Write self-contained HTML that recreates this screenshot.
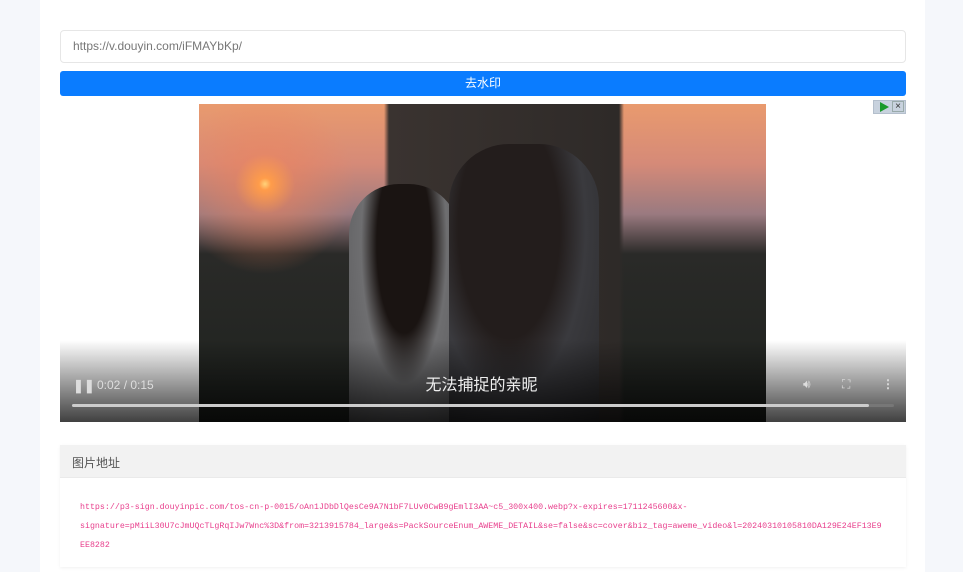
<!DOCTYPE html>
<html><head><meta charset="utf-8"><style>
*{margin:0;padding:0;box-sizing:border-box}
body{width:963px;height:572px;overflow:hidden;background:#f5f7fb;font-family:"Liberation Sans","Noto Sans CJK SC",sans-serif;position:relative}
.card{position:absolute;left:40px;top:0;width:885px;height:572px;background:#fff}
.inp{position:absolute;left:60px;top:30px;width:846px;height:33px;border:1px solid #e6e6e6;border-radius:4px;font-size:12px;color:#777;padding:8px 12px}
.btn{position:absolute;left:60px;top:71px;width:846px;height:25px;background:#0a7cff;border-radius:3px;color:#fff;font-size:12px;text-align:center;line-height:25px}
.vid{position:absolute;left:199px;top:104px;width:567px;height:318px;overflow:hidden;
background:
radial-gradient(circle at 66px 80px,#ffd27a 0,#ff9c4a 6px,rgba(240,130,90,.5) 30px,rgba(0,0,0,0) 90px),
linear-gradient(90deg,rgba(0,0,0,0) 0,rgba(0,0,0,0) 185px,#3a3330 190px,#2e2a28 420px,rgba(0,0,0,0) 425px),
linear-gradient(180deg,#e99a6e 0,#d58a78 60px,#9a7a80 110px,#2a2a28 150px,#1e221e 318px)}
.p1{position:absolute;left:250px;top:40px;width:150px;height:280px;background:radial-gradient(ellipse at 40% 30%,#231d1c 0,#231d1c 40%,#3a3a3e 60%,#2a2a2c 100%);border-radius:60px 60px 0 0}
.p2{position:absolute;left:150px;top:80px;width:110px;height:240px;background:radial-gradient(ellipse at 50% 25%,#1a1412 0,#1a1412 35%,#6e6e70 55%,#5a5a5c 100%);border-radius:50px 50px 0 0}
.grad{position:absolute;left:60px;top:340px;width:846px;height:82px;background:linear-gradient(180deg,rgba(0,0,0,0),rgba(0,0,0,.75))}
.ctl{position:absolute;color:#ddd;font-size:12px}
.bar{position:absolute;left:72px;top:404px;width:822px;height:3px;background:#777;border-radius:2px}
.bar i{display:block;width:797px;height:3px;background:#ccc;border-radius:2px}
.sub{position:absolute;left:0;width:963px;text-align:center;top:371px;color:#eee;font-size:16px}
.panel{position:absolute;left:60px;top:445px;width:846px;height:122px;background:#fff;box-shadow:0 1px 3px rgba(0,0,0,.06)}
.ph{height:33px;background:#f2f2f2;border-bottom:1px solid #eaeaea;font-size:12px;color:#555;padding:9px 12px}
.pb{padding:20px 20px 0 20px;font-family:"Liberation Mono",monospace;font-size:8.3px;line-height:19px;color:#e83e8c;word-break:normal;overflow-wrap:anywhere}
.ad{position:absolute;left:873px;top:100px;width:33px;height:14px;background:#c8d2de;border:1px solid #b4bfcc}
</style></head><body>
<div class="card"></div>
<div class="inp">https://v.douyin.com/iFMAYbKp/</div>
<div class="btn">去水印</div>
<div class="vid"><div class="p2"></div><div class="p1"></div></div>
<div class="ad"><span style="position:absolute;left:6px;top:1px;width:0;height:0;border-left:9px solid #1a9a2a;border-top:5px solid transparent;border-bottom:5px solid transparent"></span><span style="position:absolute;left:18px;top:0;width:12px;height:11px;border:1px solid #9aa;font-size:10px;line-height:9px;text-align:center;color:#333">×</span></div>
<div class="grad"></div>
<div class="sub">无法捕捉的亲昵</div>
<div class="ctl" style="left:73px;top:378px;font-size:13px;font-weight:bold">❚❚</div>
<div class="ctl" style="left:97px;top:378px">0:02 / 0:15</div>
<div class="ctl" style="left:803px;top:377px">🔊︎</div>
<div class="ctl" style="left:842px;top:377px">⛶</div>
<div class="ctl" style="left:882px;top:377px;font-weight:bold">⋮</div>
<div class="bar"><i></i></div>
<div class="panel"><div class="ph">图片地址</div>
<div class="pb">https://p3-sign.douyinpic.com/tos-cn-p-0015/oAn1JDbDlQesCe9A7N1bF7LUv0CwB9gEmlI3AA~c5_300x400.webp?x-expires=1711245600&amp;x-<br>signature=pMiiL30U7cJmUQcTLgRqIJw7Wnc%3D&amp;from=3213915784_large&amp;s=PackSourceEnum_AWEME_DETAIL&amp;se=false&amp;sc=cover&amp;biz_tag=aweme_video&amp;l=20240310105810DA129E24EF13E9<br>EE8282</div></div>
</body></html>
